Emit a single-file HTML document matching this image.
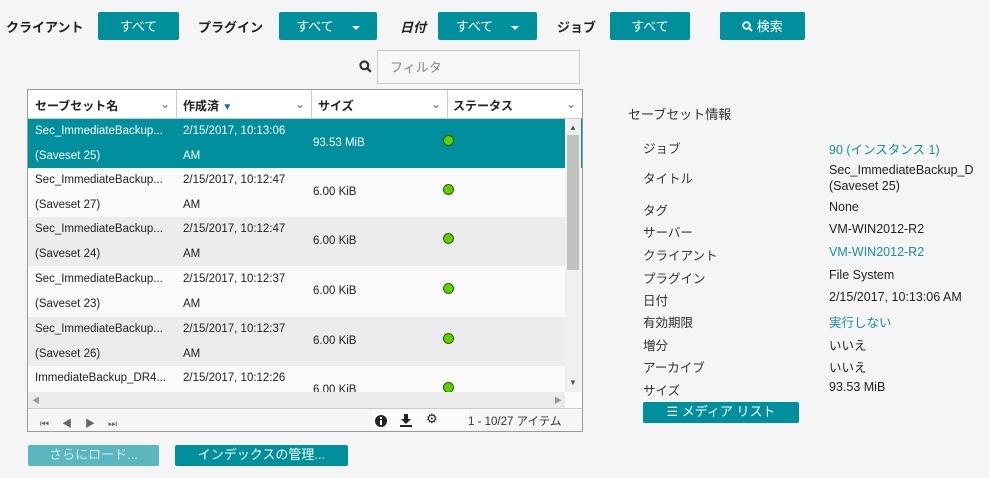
<!DOCTYPE html><html><head><meta charset="utf-8"><style>
body{margin:0;width:989px;height:478px;background:#f5f5f5;font-family:"Liberation Sans","Noto Sans CJK JP",sans-serif;font-size:12px;color:#222;position:relative;overflow:hidden}
.a{position:absolute;white-space:nowrap}
.btn{position:absolute;background:#008f9c;color:#fff;border-radius:2px;text-align:center;font-size:13px}
.lbl{font-size:13px;font-weight:bold}
.tri{display:inline-block;width:0;height:0;border-left:4px solid transparent;border-right:4px solid transparent;border-top:4px solid #fff;vertical-align:middle;margin-left:18px}
.row{position:absolute;left:28px;width:537px;height:49px;font-size:11.5px}
.row span{position:absolute}
.dot{width:9px;height:9px;border-radius:50%;background:#5ad400;border:1px solid #3a5a00;left:415px;top:16px}
.k{position:absolute;left:643px;font-size:12.5px;color:#333}
.v{position:absolute;left:829px;font-size:12.5px;color:#222}
.ln{color:#1a8fa0}
</style></head><body>
<div class="a lbl" style="left:6px;top:17px">クライアント</div>
<div class="btn" style="left:98px;top:12px;width:81px;height:28px;line-height:30px">すべて</div>
<div class="a lbl" style="left:198px;top:17px">プラグイン</div>
<div class="btn" style="left:279px;top:12px;width:98px;height:28px;line-height:30px">すべて<span class="tri"></span></div>
<div class="a lbl" style="left:400px;top:17px;font-style:italic">日付</div>
<div class="btn" style="left:438px;top:12px;width:99px;height:28px;line-height:30px">すべて<span class="tri"></span></div>
<div class="a lbl" style="left:557px;top:17px">ジョブ</div>
<div class="btn" style="left:610px;top:12px;width:80px;height:28px;line-height:30px">すべて</div>
<div class="btn" style="left:720px;top:12px;width:85px;height:28px;line-height:30px"><svg width="11" height="11" viewBox="0 0 11 11" style="vertical-align:-1px"><circle cx="4.5" cy="4.5" r="3.3" fill="none" stroke="#fff" stroke-width="1.8"/><path d="M7 7l3 3" stroke="#fff" stroke-width="2"/></svg> 検索</div>
<svg class="a" style="left:359px;top:60px" width="13" height="13" viewBox="0 0 11 11"><circle cx="4.5" cy="4.5" r="3.3" fill="none" stroke="#333" stroke-width="1.8"/><path d="M7 7l3 3" stroke="#333" stroke-width="2"/></svg>
<div class="a" style="left:377px;top:50px;width:201px;height:32px;border:1px solid #ccc;background:#f7f7f7;color:#888;font-size:13px;line-height:34px;text-indent:12px">フィルタ</div>
<div class="a" style="left:27px;top:89px;width:554px;height:341px;border:1px solid #999;background:#fafafa"></div>
<div class="a" style="left:28px;top:90px;width:554px;height:28px;background:#fff;border-bottom:1px solid #ccc;font-size:12px;font-weight:bold"></div>
<div class="a" style="left:176px;top:90px;height:28px;border-left:1px solid #ccc"></div>
<div class="a" style="left:311px;top:90px;height:28px;border-left:1px solid #ccc"></div>
<div class="a" style="left:447px;top:90px;height:28px;border-left:1px solid #ccc"></div>
<div class="a" style="left:35px;top:97px;font-weight:bold">セーブセット名</div>
<div class="a" style="left:183px;top:97px;font-weight:bold">作成済 <span style="color:#1b6fc0;font-size:10px">▼</span></div>
<div class="a" style="left:318px;top:97px;font-weight:bold">サイズ</div>
<div class="a" style="left:453px;top:97px;font-weight:bold">ステータス</div>
<div class="a" style="left:160px;top:97px;color:#666">⌄</div><div class="a" style="left:295px;top:97px;color:#666">⌄</div><div class="a" style="left:431px;top:97px;color:#666">⌄</div><div class="a" style="left:566px;top:97px;color:#666">⌄</div>
<div class="row" style="top:119px;background:#008f9c;color:#fff;width:554px"><span style="left:7px;top:6px">Sec_ImmediateBackup...</span><span style="left:155px;top:6px">2/15/2017, 10:13:06</span><span style="left:7px;top:31px">(Saveset 25)</span><span style="left:155px;top:31px">AM</span><span style="left:285px;top:18px">93.53 MiB</span><span class="dot"></span></div>
<div class="row" style="top:168px;background:#fafafa"><span style="left:7px;top:6px">Sec_ImmediateBackup...</span><span style="left:155px;top:6px">2/15/2017, 10:12:47</span><span style="left:7px;top:31px">(Saveset 27)</span><span style="left:155px;top:31px">AM</span><span style="left:285px;top:18px">6.00 KiB</span><span class="dot"></span></div>
<div class="row" style="top:217px;background:#ececec"><span style="left:7px;top:6px">Sec_ImmediateBackup...</span><span style="left:155px;top:6px">2/15/2017, 10:12:47</span><span style="left:7px;top:31px">(Saveset 24)</span><span style="left:155px;top:31px">AM</span><span style="left:285px;top:18px">6.00 KiB</span><span class="dot"></span></div>
<div class="row" style="top:267px;background:#fafafa"><span style="left:7px;top:6px">Sec_ImmediateBackup...</span><span style="left:155px;top:6px">2/15/2017, 10:12:37</span><span style="left:7px;top:31px">(Saveset 23)</span><span style="left:155px;top:31px">AM</span><span style="left:285px;top:18px">6.00 KiB</span><span class="dot"></span></div>
<div class="row" style="top:317px;background:#ececec"><span style="left:7px;top:6px">Sec_ImmediateBackup...</span><span style="left:155px;top:6px">2/15/2017, 10:12:37</span><span style="left:7px;top:31px">(Saveset 26)</span><span style="left:155px;top:31px">AM</span><span style="left:285px;top:18px">6.00 KiB</span><span class="dot"></span></div>
<div class="row" style="top:366px;height:26px;overflow:hidden;background:#fafafa"><span style="left:7px;top:6px">ImmediateBackup_DR4...</span><span style="left:155px;top:6px">2/15/2017, 10:12:26</span><span style="left:285px;top:18px">6.00 KiB</span><span class="dot"></span></div>
<div class="a" style="left:565px;top:119px;width:16px;height:273px;background:#f0f0f0"></div>
<div class="a" style="left:567px;top:135px;width:12px;height:135px;background:#c1c1c1"></div>
<div class="a" style="left:569px;top:123px;font-size:8px;color:#555">▲</div>
<div class="a" style="left:569px;top:378px;font-size:8px;color:#555">▼</div>
<div class="a" style="left:28px;top:392px;width:537px;height:16px;background:#ebebeb"></div>
<div class="a" style="left:32px;top:395px;font-size:8px;color:#999">◀</div><div class="a" style="left:554px;top:395px;font-size:8px;color:#999">▶</div>
<div class="a" style="left:28px;top:408px;width:554px;height:22px;border-top:1px solid #ccc;background:#f5f5f5;font-size:9px;color:#555"></div>
<div class="a" style="left:40px;top:415px;font-size:10px;color:#666;letter-spacing:13px">⏮◀▶⏭</div>
<div class="a" style="left:372px;top:410px;width:97px;height:20px;background:#fbfbfb"></div>
<svg class="a" style="left:375px;top:415px" width="12" height="12"><circle cx="6" cy="6" r="6" fill="#222"/><rect x="5" y="5" width="2" height="5" fill="#fff"/><rect x="5" y="2" width="2" height="2" fill="#fff"/></svg>
<svg class="a" style="left:400px;top:414px" width="12" height="13"><path d="M4 0h4v5h3l-5 5-5-5h3z M0 11h12v2H0z" fill="#222"/></svg>
<div class="a" style="left:426px;top:411px;font-size:13px;color:#222">⚙</div>
<div class="a" style="left:468px;top:413px;font-size:11.5px;color:#333">1 - 10/27 アイテム</div>
<div class="btn" style="left:28px;top:445px;width:131px;height:21px;line-height:20px;background:#5ab6bf;color:#cfe9ec">さらにロード...</div>
<div class="btn" style="left:175px;top:445px;width:173px;height:21px;line-height:20px">インデックスの管理...</div>
<div class="a" style="left:628px;top:104px;font-size:13px;color:#333">セーブセット情報</div>
<div class="k" style="top:138px">ジョブ</div><div class="v ln" style="top:139px">90 (インスタンス 1)</div>
<div class="k" style="top:168px">タイトル</div><div class="v" style="top:162px;line-height:16px">Sec_ImmediateBackup_D<br>(Saveset 25)</div>
<div class="k" style="top:200px">タグ</div><div class="v" style="top:200px">None</div>
<div class="k" style="top:222px">サーバー</div><div class="v" style="top:222px">VM-WIN2012-R2</div>
<div class="k" style="top:245px">クライアント</div><div class="v ln" style="top:245px">VM-WIN2012-R2</div>
<div class="k" style="top:268px">プラグイン</div><div class="v" style="top:268px">File System</div>
<div class="k" style="top:290px">日付</div><div class="v" style="top:290px">2/15/2017, 10:13:06 AM</div>
<div class="k" style="top:312px">有効期限</div><div class="v ln" style="top:312px">実行しない</div>
<div class="k" style="top:335px">増分</div><div class="v" style="top:335px">いいえ</div>
<div class="k" style="top:357px">アーカイブ</div><div class="v" style="top:357px">いいえ</div>
<div class="k" style="top:380px">サイズ</div><div class="v" style="top:380px">93.53 MiB</div>
<div class="btn" style="left:643px;top:402px;width:156px;height:21px;line-height:20px">☰ メディア リスト</div>
</body></html>
